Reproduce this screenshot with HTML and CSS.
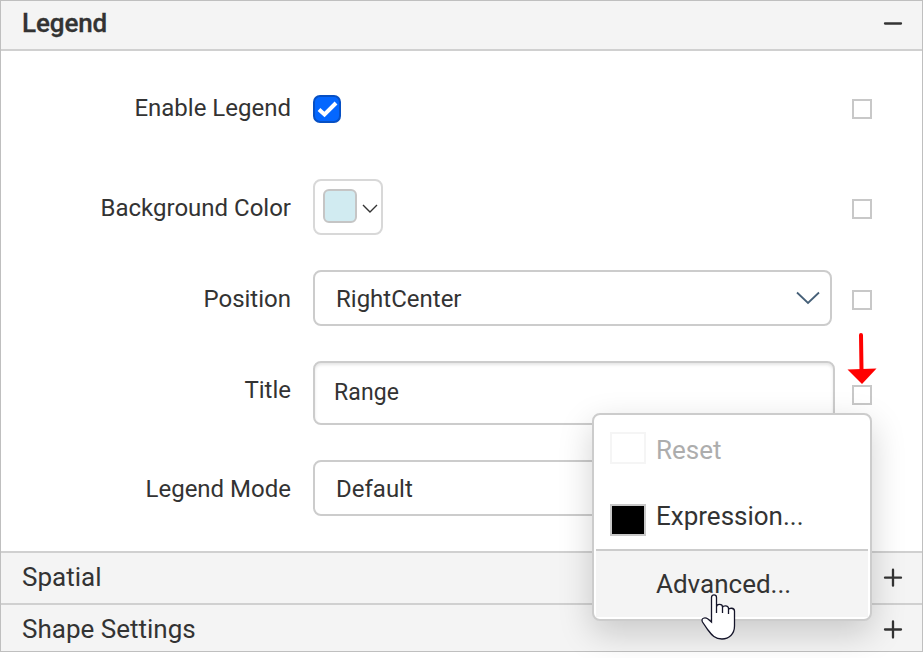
FILE: index.html
```html
<!DOCTYPE html>
<html lang="en">
<head>
<meta charset="utf-8">
<title>Legend</title>
<link rel="stylesheet" href="styles.css">
</head>
<body>
<main class="panel">
  <header class="section open"><span>Legend</span><svg class="sign" viewBox="0 0 18 18"><path d="M1 9.5H17"/></svg></header>
  <div class="body">
    <div class="row first">
      <span class="label">Enable Legend</span>
      <span class="field"><span class="check"><svg viewBox="0 0 28 28"><path d="M6 14.5L11.5 19.5L23 8"/></svg></span></span>
      <i class="option"></i>
    </div>
    <div class="row">
      <span class="label">Background Color</span>
      <span class="field"><span class="picker"><i class="swatch"></i><svg viewBox="0 0 16 10"><path d="M1 1L8 8L15 1"/></svg></span></span>
      <i class="option"></i>
    </div>
    <div class="row">
      <span class="label">Position</span>
      <span class="field"><span class="select"><span>RightCenter</span><svg viewBox="0 0 24 14"><path d="M1 1.5L12 12L23 1.5"/></svg></span></span>
      <i class="option"></i>
    </div>
    <div class="row tall">
      <span class="label">Title</span>
      <span class="field"><span class="input"><span>Range</span></span></span>
      <i class="option"></i>
    </div>
    <div class="row">
      <span class="label">Legend Mode</span>
      <span class="field"><span class="select"><span>Default</span></span></span>
    </div>
  </div>
  <div class="section spatial"><span>Spatial</span><svg class="sign" viewBox="0 0 18 18"><path d="M1 9.7H17M9 1.7V17.7"/></svg></div>
  <div class="section last"><span>Shape Settings</span><svg class="sign" viewBox="0 0 18 18"><path d="M1 9.5H17M9 1.500V17.500"/></svg></div>
</main>
<svg class="arrow" viewBox="0 0 30 52"><path d="M14 3L14.500 38" stroke="#f00" stroke-width="4" stroke-linecap="round"/><path d="M0.5 37.5L29.5 36.5L15 52Z" fill="#f00"/></svg>
<div class="menu">
  <div class="item reset"><i class="box"></i><span>Reset</span></div>
  <div class="item expression"><i class="box"></i><span>Expression...</span></div>
  <div class="item advanced"><span>Advanced...</span></div>
</div>
<svg class="cursor" viewBox="0 0 36 48"><path d="M10.500 29V4.500C10.500 1 15.500 1 15.500 4.500V20V14C15.500 10.500 21.500 10.500 21.500 14V20V15C21.500 12 27.500 12 27.500 15.500V21V17C27.500 14.500 33.500 14.500 33.500 18V33C33.500 41 28 46 21 46C14 46 11 42.500 7 37L1.500 29C-.500 25 4 24 7 26Z"/></svg>
</body>
</html>
```
FILE: styles.css
```css
* { box-sizing: border-box; }
body {
  margin: 0;
  background: #fff;
  color: #333;
  font: 24px/28px Roboto, "Liberation Sans", sans-serif;
}
svg { display: block; fill: none; overflow: visible; }
.panel {
  height: 652px;
  border: 1px solid #bfbfbf;
  display: flex;
  flex-direction: column;
}
.section {
  height: 52px;
  padding: 0 20px 0 21px;
  display: flex;
  align-items: center;
  justify-content: space-between;
  flex: none;
  background: #f4f4f4;
  border-top: 2px solid #d0d0d0;
  font-size: 26px;
}
.section.open {
  height: 50px;
  padding-bottom: 4px;
  border-top: 0;
  border-bottom: 2px solid #d0d0d0;
  font-weight: 500;
  letter-spacing: -0.1px;
  -webkit-text-stroke: 0.3px #333;
}
.section.open span { margin-bottom: 1px; }
.section.spatial { padding-bottom: 2px; }
.section.last { height: 48px; flex: 1; padding-top: 2px; }
.sign { width: 18px; height: 18px; stroke: #333; stroke-width: 2.3; stroke-linecap: round; }
.body { height: 500px; padding-top: 30px; flex: none; }
.row {
  display: grid;
  grid-template-columns: 290px 522px 59px;
  height: 56px;
  margin-bottom: 35px;
  align-items: center;
}
.row.first { margin-bottom: 42px; }
.row.tall { height: 64px; }
.label { text-align: right; padding-top: 2px; }
.first .label { padding: 0 0 2px; }
.tall .label { padding: 0 0 6px; }
.field { padding-left: 22px; }
.option { width: 20px; height: 20px; border: 2px solid #c8c8c8; margin: 4px 0 0 39px; }
.first .option { margin-top: 0; }
.check { display: block; width: 28px; height: 28px; border: 2px solid #0750c4; border-radius: 7px; background: #0467ff; }
.check svg { width: 28px; height: 28px; margin: -2px; stroke: #fff; stroke-width: 4; }
.picker {
  width: 70px;
  height: 56px;
  padding: 0 3px 3px 8px;
  border: 2px solid #d8d8d8;
  border-radius: 8px;
  display: flex;
  align-items: center;
  justify-content: space-between;
}
.swatch { width: 34px; height: 34px; border: 2px solid #c5c5c5; border-radius: 6px; background: #d1ebf1; }
.picker svg { width: 16px; height: 10px; margin-top: 6px; stroke: #333; stroke-width: 1.4; }
.select, .input {
  height: 56px;
  width: 519px;
  border: 2px solid #ccc;
  border-radius: 8px;
  padding: 0 10px 0 21px;
  display: flex;
  align-items: center;
  justify-content: space-between;
}
.select span { padding-top: 2px; }
.select svg { width: 24px; height: 14px; stroke: #466078; stroke-width: 1.8; }
.input { width: 522px; height: 64px; padding: 0 19px; font-size: 23px; letter-spacing: 0.1px; box-shadow: inset 0 2px 3px rgba(0, 0, 0, .1); }
.arrow { position: absolute; left: 847px; top: 332px; width: 30px; height: 52px; }
.menu {
  position: absolute;
  left: 592px;
  top: 413px;
  width: 280px;
  height: 208px;
  padding: 2px;
  background: #fff;
  border: 2px solid #ccc;
  border-radius: 8px;
  box-shadow: 0 12px 34px rgba(0, 0, 0, .18);
  font-size: 26px;
  line-height: 30px;
}
.item { display: flex; align-items: center; height: 66px; padding-left: 14px; }
.box { width: 36px; height: 32px; border: 2px solid #c8c8c8; margin-right: 10px; background: #000; }
.reset { color: #adadad; }
.reset .box { background: #fff; border-color: #f5f5f5; margin-bottom: 4px; }
.expression .box { margin-top: 8px; }
.advanced { height: 68px; padding-left: 60px; background: #f4f4f4; border-top: 2px solid #ccc; }
.cursor { position: absolute; left: 701px; top: 593px; width: 36px; height: 48px; fill: #fff; stroke: #15152a; stroke-width: 1.3; }
```
